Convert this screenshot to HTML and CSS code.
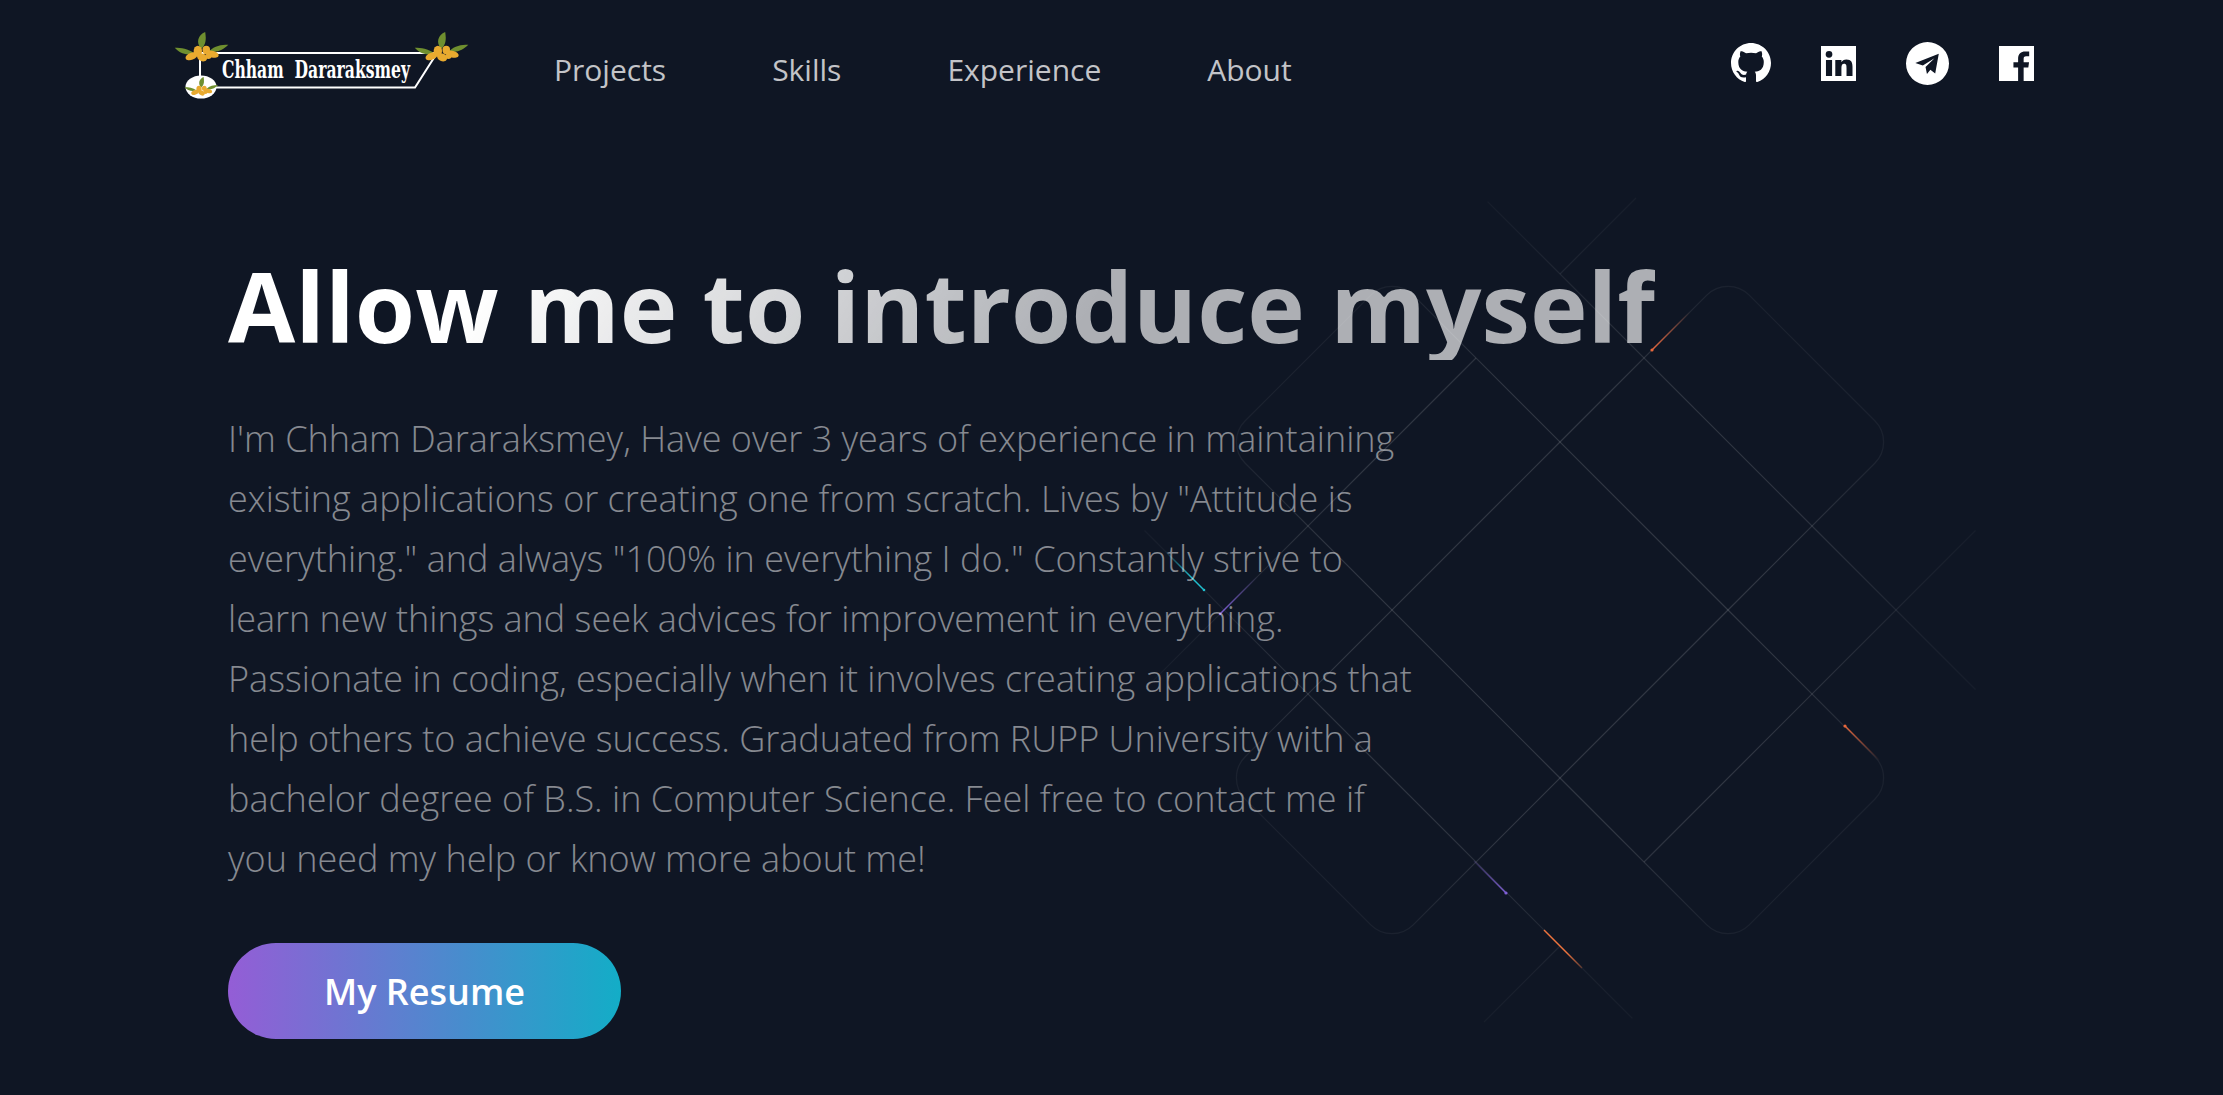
FILE: index.html
```html
<!DOCTYPE html>
<html lang="en">
<head>
<meta charset="utf-8">
<title>Chham Dararaksmey</title>
<link rel="stylesheet" href="styles.css">
</head>
<body>
<svg class="pattern" width="2223" height="1095" viewBox="0 0 2223 1095" aria-hidden="true">
  <defs>
    <radialGradient id="fade" gradientUnits="userSpaceOnUse" cx="0" cy="0" r="520">
      <stop offset="0" stop-color="#fff" stop-opacity=".14"/>
      <stop offset=".45" stop-color="#fff" stop-opacity=".14"/>
      <stop offset=".7" stop-color="#fff" stop-opacity=".05"/>
      <stop offset="1" stop-color="#fff" stop-opacity="0"/>
    </radialGradient>
    <linearGradient id="b1" gradientUnits="userSpaceOnUse" x1="1652" y1="350" x2="1690" y2="312"><stop offset="0" stop-color="#e8673c"/><stop offset="1" stop-color="#e8673c" stop-opacity="0"/></linearGradient>
    <linearGradient id="b2" gradientUnits="userSpaceOnUse" x1="1204" y1="590" x2="1165" y2="551"><stop offset="0" stop-color="#1fc0cf"/><stop offset=".3" stop-color="#1fc0cf"/><stop offset="1" stop-color="#1fc0cf" stop-opacity="0"/></linearGradient>
    <linearGradient id="b3" gradientUnits="userSpaceOnUse" x1="1220" y1="614" x2="1258" y2="576"><stop offset="0" stop-color="#7f5fd6"/><stop offset="1" stop-color="#7f5fd6" stop-opacity="0"/></linearGradient>
    <linearGradient id="b4" gradientUnits="userSpaceOnUse" x1="1845" y1="726" x2="1880" y2="761"><stop offset="0" stop-color="#e8673c"/><stop offset="1" stop-color="#e8673c" stop-opacity="0"/></linearGradient>
    <linearGradient id="b5" gradientUnits="userSpaceOnUse" x1="1506" y1="893" x2="1474" y2="861"><stop offset="0" stop-color="#7f5fd6"/><stop offset="1" stop-color="#7f5fd6" stop-opacity=".15"/></linearGradient>
    <linearGradient id="b6" gradientUnits="userSpaceOnUse" x1="1544" y1="930" x2="1582" y2="968"><stop offset="0" stop-color="#f0743c"/><stop offset=".6" stop-color="#f0743c"/><stop offset="1" stop-color="#f0743c" stop-opacity=".3"/></linearGradient>
  </defs>
  <g class="grid" transform="translate(1560 610) rotate(45)">
    <path d="M-118.8 -118.8V-326.4A30 30 0 0 1 -88.8 -356.4H88.8A30 30 0 0 1 118.8 -326.4V-118.8"/>
    <path d="M118.8 -118.8H326.4A30 30 0 0 1 356.4 -88.8V88.8A30 30 0 0 1 326.4 118.8H118.8"/>
    <path d="M118.8 -118.8H-326.4A30 30 0 0 0 -356.4 -88.8V88.8A30 30 0 0 0 -326.4 118.8H118.8"/>
    <path d="M-118.8 -118.8V326.4A30 30 0 0 0 -88.8 356.4H88.8A30 30 0 0 0 118.8 326.4V-118.8"/>
    <path d="M-340 -237.6H350"/>
    <path d="M-350 237.6H340"/>
    <path d="M-237.6 -345V-237.6M-237.6 -118.8V345"/>
    <path d="M237.6 -350V118.8M237.6 237.6V345"/>
  </g>
  <g class="beams">
    <path stroke="url(#b1)" d="M1652 350L1690 312"/><circle cx="1652" cy="350" r="1.6" fill="#e8673c"/>
    <path stroke="url(#b2)" d="M1204 590L1165 551"/><circle cx="1204" cy="590" r="1.3" fill="#1fc0cf"/>
    <path stroke="url(#b3)" d="M1220 614L1258 576"/><circle cx="1220" cy="614" r="1.3" fill="#7f5fd6"/>
    <path stroke="url(#b4)" d="M1845 726L1880 761"/><circle cx="1845" cy="726" r="1.6" fill="#e8673c"/>
    <path stroke="url(#b5)" d="M1506 893L1474 861"/><circle cx="1506" cy="893" r="1.6" fill="#7f5fd6"/>
    <path stroke="url(#b6)" d="M1544 930L1582 968"/>
  </g>
</svg>

<header class="nav">
  <a class="logo" href="#" aria-label="Chham Dararaksmey">
    <svg width="320" height="90" viewBox="0 0 320 90">
      <defs>
        <g id="sprig">
          <path class="leaf" d="M0 -2C-5 -8 -3 -15 4 -18C5 -11 5 -6 0 -2Z"/>
          <path class="leaf" d="M-7 2C-12 -2 -19 -3 -25 -3C-21 2 -13 5 -7 2Z"/>
          <path class="leaf" d="M8 0C13 -5 19 -6 26 -6C21 -1 15 2 8 0Z"/>
          <g class="petal">
            <ellipse cx="-9" cy="5" rx="6" ry="3.4" transform="rotate(-20 -9 5)"/>
            <ellipse cx="-3" cy="0" rx="4" ry="5"/>
            <ellipse cx="1" cy="6" rx="5" ry="3.6" transform="rotate(25 1 6)"/>
            <ellipse cx="5" cy="-1" rx="3.6" ry="4"/>
            <ellipse cx="11" cy="3" rx="6" ry="3.2" transform="rotate(15 11 3)"/>
            <ellipse cx="7" cy="5" rx="3" ry="2.6"/>
          </g>
        </g>
      </defs>
      <path class="frame" d="M40 33H277L255 67.5H55M40 33V56"/>
      <ellipse class="oval" cx="41" cy="67" rx="15.5" ry="11.5"/>
      <text class="logo-text" x="62" y="58" textLength="188" lengthAdjust="spacingAndGlyphs" xml:space="preserve">Chham  Dararaksmey</text>
      <use href="#sprig" transform="translate(41 31) scale(1.05)"/>
      <use href="#sprig" transform="translate(281 31) scale(1.05)"/>
      <use href="#sprig" transform="translate(41 69) scale(.66)"/>
    </svg>
  </a>
  <nav class="links">
    <a href="#">Projects</a>
    <a href="#">Skills</a>
    <a href="#">Experience</a>
    <a href="#">About</a>
  </nav>
  <div class="socials">
    <a href="#" aria-label="GitHub"><svg class="gh" viewBox="0 0 16 16"><path fill-rule="evenodd" d="M8 0C3.58 0 0 3.58 0 8c0 3.54 2.29 6.53 5.47 7.59.4.07.55-.17.55-.38 0-.19-.01-.82-.01-1.49-2.01.37-2.53-.49-2.69-.94-.09-.23-.48-.94-.82-1.13-.28-.15-.68-.52-.01-.53.63-.01 1.08.58 1.23.82.72 1.21 1.87.87 2.33.66.07-.52.28-.87.51-1.07-1.78-.2-3.64-.89-3.64-3.95 0-.87.31-1.59.82-2.15-.08-.2-.36-1.02.08-2.12 0 0 .67-.21 2.2.82.64-.18 1.32-.27 2-.27.68 0 1.36.09 2 .27 1.53-1.04 2.2-.82 2.2-.82.44 1.1.16 1.92.08 2.12.51.56.82 1.27.82 2.15 0 3.07-1.87 3.75-3.65 3.95.29.25.54.73.54 1.48 0 1.07-.01 1.93-.01 2.2 0 .21.15.46.55.38A8.013 8.013 0 0016 8c0-4.42-3.58-8-8-8z"/></svg></a>
    <a href="#" aria-label="LinkedIn"><svg class="sq" viewBox="0 0 24 24"><path fill-rule="evenodd" d="M0 0H24V24H0ZM3.4 9.6V20.6H7.6V9.6ZM5.5 3.4a2.3 2.3 0 1 0 0 4.6a2.3 2.3 0 1 0 0-4.6ZM9.8 9.6V20.6H14V15c0-1.5.3-2.9 1.9-2.9s1.6 1.5 1.6 3V20.6h4.1v-6.2c0-3-.7-5.1-4.2-5.1-1.7 0-2.9.9-3.4 1.8V9.6Z"/></svg></a>
    <a href="#" aria-label="Telegram"><svg class="tg" viewBox="0 0 24 24"><path fill-rule="evenodd" d="M12 0a12 12 0 1 0 0 24a12 12 0 1 0 0-24ZM18.3 6.6L5.2 11.7L9.4 13.1L15.9 9.1L10.9 13.9L11.7 17.9L13.6 15.5L16.3 17.6Z"/></svg></a>
    <a href="#" aria-label="Facebook"><svg class="sq" viewBox="0 0 24 24"><path fill-rule="evenodd" d="M0 0H24V24H0ZM16.9 24V14.7H20.1L20.6 11.1H16.9V8.800C16.900 7.800 17.200 7 18.700 7H20.700V3.800C20.400 3.800 19.200 3.700 17.900 3.700C15.100 3.700 13.100 5.400 13.100 8.500V11.100H9.900V14.700H13.100V24Z"/></svg></a>
  </div>
</header>

<main class="hero">
  <h1 class="title">Allow me to introduce myself</h1>
  <p class="intro">I'm Chham Dararaksmey, Have over 3 years of experience in maintaining existing applications or creating one from scratch. Lives by "Attitude is everything." and always "100% in everything I do." Constantly strive to learn new things and seek advices for improvement in everything. Passionate in coding, especially when it involves creating applications that help others to achieve success. Graduated from RUPP University with a bachelor degree of B.S. in Computer Science. Feel free to contact me if you need my help or know more about me!</p>
  <a class="resume" href="#">My Resume</a>
</main>
</body>
</html>
```
FILE: styles.css
```css
* { box-sizing: border-box; }
html, body { margin: 0; height: 100%; }
body {
  position: relative;
  min-height: 1095px;
  overflow: hidden;
  background: #0f1624;
  font-family: "Open Sans", sans-serif;
  color: #fff;
}
a { color: inherit; text-decoration: none; }

.pattern { position: absolute; left: 0; top: 0; pointer-events: none; }
.grid path { fill: none; stroke: url(#fade); stroke-width: 1.2; }
.beams path { fill: none; stroke-width: 1.4; }

.nav {
  position: relative;
  display: flex;
  align-items: flex-start;
  padding: 20px 189px 0 160px;
  height: 120px;
}
.logo { display: block; width: 320px; height: 90px; flex: none; }
.logo svg { display: block; }
.frame { fill: none; stroke: #fff; stroke-width: 2; }
.oval { fill: #fff; }
.leaf { fill: #6f8f2f; }
.petal { fill: #e9aa2f; }
.logo-text {
  font-family: "DejaVu Serif", serif;
  font-weight: 700;
  font-size: 25px;
  fill: #fff;
  white-space: pre;
}

.links {
  display: flex;
  gap: 106px;
  margin-left: 74px;
  height: 98px;
  align-items: center;
  font-size: 30px;
  color: rgba(255, 255, 255, .75);
}
.socials {
  display: flex;
  align-items: center;
  gap: 50px;
  margin-left: auto;
  height: 86px;
}
.socials a { display: block; line-height: 0; }
.socials svg { fill: #fff; display: block; }
.gh { width: 40px; height: 40px; }
.sq { width: 35px; height: 35px; }
.tg { width: 43px; height: 43px; }

.hero {
  position: relative;
  padding: 132px 0 0 228px;
}
.title {
  display: table;
  margin: 0;
  font-size: 97.5px;
  line-height: 108px;
  font-weight: 700;
  background: linear-gradient(121.57deg, #fff 18.77%, rgba(255, 255, 255, .66) 60.15%);
  -webkit-background-clip: text;
  background-clip: text;
  -webkit-text-fill-color: transparent;
}
.intro {
  max-width: 1200px;
  margin: 49px 0 0;
  font-size: 36px;
  line-height: 60px;
  font-weight: 300;
  color: rgba(255, 255, 255, .5);
}
.resume {
  display: flex;
  align-items: center;
  justify-content: center;
  width: 393px;
  height: 96px;
  margin-top: 54px;
  border-radius: 48px;
  background: linear-gradient(270deg, #13adc7 0%, #6978d1 66%, #945dd6 100%);
  font-size: 36px;
  font-weight: 600;
}
```
